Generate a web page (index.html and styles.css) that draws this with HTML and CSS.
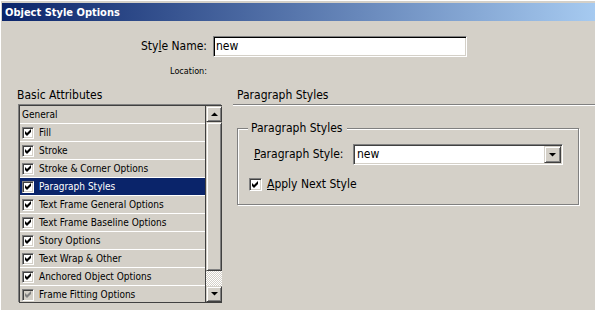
FILE: index.html
```html
<!DOCTYPE html>
<html>
<head>
<meta charset="utf-8">
<title>Object Style Options</title>
<link rel="stylesheet" href="styles.css">
</head>
<body>
<div class="window">
  <div class="titlebar">Object Style Options</div>

  <div class="name-row">
    <span class="name-label">Sty<u>l</u>e Name:</span>
    <div class="field"><span class="field-text">new</span></div>
  </div>
  <div class="loc-row"><span class="loc-label">Location:</span></div>

  <div class="main">
    <div class="left">
      <div class="heading">Basic Attributes</div>
      <div class="list">
        <div class="rows">
          <div class="row"><span class="row-text">General</span></div>
          <div class="row"><span class="cb"><svg viewBox="0 0 7 7" width="7" height="7"><path d="M0 2 L2 4 L6 0 L6 3 L2 7 L0 5 Z"/></svg></span><span class="row-text">Fill</span></div>
          <div class="row"><span class="cb"><svg viewBox="0 0 7 7" width="7" height="7"><path d="M0 2 L2 4 L6 0 L6 3 L2 7 L0 5 Z"/></svg></span><span class="row-text">Stroke</span></div>
          <div class="row"><span class="cb"><svg viewBox="0 0 7 7" width="7" height="7"><path d="M0 2 L2 4 L6 0 L6 3 L2 7 L0 5 Z"/></svg></span><span class="row-text">Stroke &amp; Corner Options</span></div>
          <div class="row selected"><span class="cb"><svg viewBox="0 0 7 7" width="7" height="7"><path d="M0 2 L2 4 L6 0 L6 3 L2 7 L0 5 Z"/></svg></span><span class="row-text">Paragraph Styles</span></div>
          <div class="row"><span class="cb"><svg viewBox="0 0 7 7" width="7" height="7"><path d="M0 2 L2 4 L6 0 L6 3 L2 7 L0 5 Z"/></svg></span><span class="row-text">Text Frame General Options</span></div>
          <div class="row"><span class="cb"><svg viewBox="0 0 7 7" width="7" height="7"><path d="M0 2 L2 4 L6 0 L6 3 L2 7 L0 5 Z"/></svg></span><span class="row-text">Text Frame Baseline Options</span></div>
          <div class="row"><span class="cb"><svg viewBox="0 0 7 7" width="7" height="7"><path d="M0 2 L2 4 L6 0 L6 3 L2 7 L0 5 Z"/></svg></span><span class="row-text">Story Options</span></div>
          <div class="row"><span class="cb"><svg viewBox="0 0 7 7" width="7" height="7"><path d="M0 2 L2 4 L6 0 L6 3 L2 7 L0 5 Z"/></svg></span><span class="row-text">Text Wrap &amp; Other</span></div>
          <div class="row"><span class="cb"><svg viewBox="0 0 7 7" width="7" height="7"><path d="M0 2 L2 4 L6 0 L6 3 L2 7 L0 5 Z"/></svg></span><span class="row-text">Anchored Object Options</span></div>
          <div class="row"><span class="cb disabled"><svg viewBox="0 0 7 7" width="7" height="7"><path d="M0 2 L2 4 L6 0 L6 3 L2 7 L0 5 Z"/></svg></span><span class="row-text">Frame Fitting Options</span></div>
        </div>
        <div class="scrollbar">
          <div class="sb-btn"><svg viewBox="0 0 7 4" width="7" height="4"><path d="M0 4 L3.5 0.5 L7 4 Z"/></svg></div>
          <div class="sb-thumb"></div>
          <div class="sb-track"></div>
          <div class="sb-btn"><svg viewBox="0 0 7 4" width="7" height="4"><path d="M0 0 L7 0 L3.5 3.5 Z"/></svg></div>
        </div>
      </div>
    </div>

    <div class="right">
      <div class="heading right-head">Paragraph Styles</div>
      <div class="divider"></div>
      <fieldset class="group">
        <legend class="group-label">Paragraph Styles</legend>
        <div class="ps-row">
          <span class="ps-label"><u>P</u>aragraph Style:</span>
          <div class="dropdown">
            <span class="dd-text">new</span>
            <span class="dd-btn"><svg viewBox="0 0 7 4" width="7" height="4"><path d="M0 0 L7 0 L3.5 3.5 Z"/></svg></span>
          </div>
        </div>
        <div class="check-row">
          <span class="cb cb-lg"><svg viewBox="0 0 7 7" width="7" height="7"><path d="M0 2 L2 4 L6 0 L6 3 L2 7 L0 5 Z"/></svg></span>
          <span class="check-label"><u>A</u>pply Next Style</span>
        </div>
      </fieldset>
    </div>
  </div>
</div>
</body>
</html>
```

FILE: styles.css
```css
* { box-sizing: border-box; }

html, body {
  margin: 0;
  padding: 0;
  background: #d4d0c8;
}

body {
  font-family: "DejaVu Sans Condensed", "DejaVu Sans", sans-serif;
  font-stretch: condensed;
  font-size: 12px;
  color: #000;
  width: 595px;
  height: 310px;
  overflow: hidden;
}

.window {
  border-top: 1px solid #fff;
  border-left: 1px solid #fff;
  height: 310px;
}

.titlebar {
  margin: 2px 0 0 1px;
  height: 18px;
  padding-left: 3px;
  display: flex;
  align-items: center;
  background: linear-gradient(to right, #0a246a, #a6caf0);
  color: #fff;
  font-weight: bold;
  font-size: 11px;
}

/* Style name row */
.name-row {
  margin-top: 15px;
  display: flex;
  align-items: center;
  gap: 6px;
}
.name-label {
  width: 206px;
  text-align: right;
  line-height: 21px;
}
.field {
  width: 254px;
  height: 21px;
  padding: 1px;
  background: #fff;
  border: 1px solid;
  border-color: #808080 #fff #fff #808080;
  box-shadow: inset 1px 1px 0 #000, inset -1px -1px 0 #d4d0c8;
  display: flex;
  align-items: center;
}
.field-text { padding-left: 1px; line-height: 17px; }

.loc-row {
  margin-top: 7px;
  width: 206px;
  height: 12px;
  line-height: 12px;
  text-align: right;
}
.loc-label {
  font-size: 9px;
  line-height: 12px;
}

/* Main columns */
.main {
  margin-top: 12px;
  margin-left: 16px;
  display: flex;
  align-items: flex-start;
}
.left { width: 205px; }
.heading {
  line-height: 14px;
  height: 14px;
}

.list {
  margin-top: 3px;
  margin-left: 2px;
  width: 203px;
  height: 198px;
  display: flex;
  border: 1px solid #404040;
  border-right: 0;
  box-shadow: -1px -1px 0 #808080;
  overflow: hidden;
}
.rows {
  width: 186px;
  height: 196px;
  border-right: 1px solid #404040;
  overflow: hidden;
}
.row {
  height: 18px;
  border-bottom: 1px solid #fff;
  display: flex;
  align-items: center;
  padding-left: 2px;
  font-size: 10px;
  white-space: nowrap;
}
.row.selected {
  background: #0a246a;
  color: #fff;
}
.row-text { line-height: 17px; }

.cb {
  width: 12px;
  height: 12px;
  flex: none;
  margin-right: 5px;
  background: #fff;
  border: 1px solid;
  border-color: #808080 #fff #fff #808080;
  box-shadow: inset 1px 1px 0 #404040, inset -1px -1px 0 #d4d0c8;
  display: flex;
  align-items: center;
  justify-content: center;
}
.cb svg { fill: #000; display: block; }
.cb.disabled { background: #d4d0c8; }
.cb.disabled svg { fill: #808080; }
.cb-lg { width: 13px; height: 13px; }

/* Scrollbar */
.scrollbar {
  width: 16px;
  height: 196px;
  display: flex;
  flex-direction: column;
}
.sb-btn, .sb-thumb {
  background: #d4d0c8;
  border: 1px solid;
  border-color: #d4d0c8 #404040 #404040 #d4d0c8;
  box-shadow: inset 1px 1px 0 #fff, inset -1px -1px 0 #808080;
}
.sb-btn {
  height: 16px;
  display: flex;
  align-items: center;
  justify-content: center;
}
.sb-btn svg { display: block; fill: #000; }
.sb-thumb { height: 149px; }
.sb-track {
  height: 15px;
  background: repeating-conic-gradient(#fff 0 25%, #d4d0c8 0 50%) 0 0 / 2px 2px;
}

/* Right column */
.right {
  flex: 1;
  margin-left: 11px;
}
.right-head { padding-left: 4px; }
.divider {
  margin-top: 2px;
  border-top: 1px solid #808080;
  border-bottom: 1px solid #fff;
}

.group {
  margin: 15px 0 0 4px;
  padding: 0 0 13px 0;
  width: 342px;
  min-width: 0;
  border: 1px solid #808080;
  box-shadow: inset 1px 1px 0 #fff, 1px 1px 0 #fff;
}
.group-label {
  margin-left: 10px;
  padding: 0 5px 0 3px;
  line-height: 14px;
  background: #d4d0c8;
}

.ps-row {
  margin-top: 9px;
  margin-left: 16px;
  display: flex;
  align-items: center;
}
.ps-label {
  width: 99px;
  line-height: 21px;
}
.dropdown {
  width: 210px;
  height: 21px;
  padding: 1px;
  background: #fff;
  border: 1px solid;
  border-color: #808080 #fff #fff #808080;
  box-shadow: inset 1px 1px 0 #404040, inset -1px -1px 0 #d4d0c8;
  display: flex;
  align-items: center;
}
.dd-text {
  flex: 1;
  padding-left: 2px;
  line-height: 17px;
}
.dd-btn {
  width: 17px;
  height: 17px;
  background: #d4d0c8;
  border: 1px solid;
  border-color: #d4d0c8 #404040 #404040 #d4d0c8;
  box-shadow: inset 1px 1px 0 #fff, inset -1px -1px 0 #808080;
  display: flex;
  align-items: center;
  justify-content: center;
}
.dd-btn svg { display: block; fill: #000; }

.check-row {
  margin-top: 12px;
  margin-left: 11px;
  display: flex;
  align-items: center;
  height: 14px;
}
.check-label { line-height: 14px; }
```
